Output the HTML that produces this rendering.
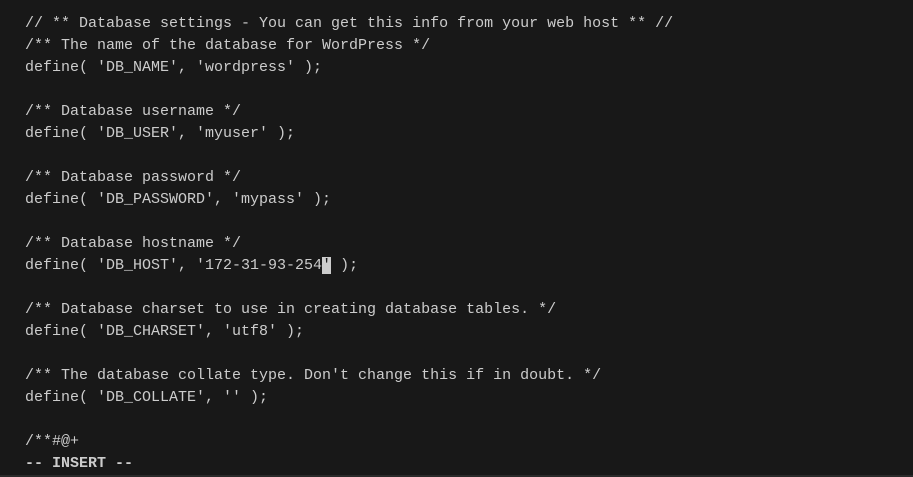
<!DOCTYPE html>
<html><head><meta charset="utf-8"><style>
html,body{margin:0;padding:0;width:913px;height:477px;background:#181818;overflow:hidden}
pre{margin:0;position:absolute;left:25px;top:13px;font-family:"Liberation Mono",monospace;font-size:15px;line-height:22px;color:#cccccc}
.c{background:#cccccc;color:#181818}
b{font-weight:bold}
.bar{position:absolute;left:0;top:475px;width:913px;height:2px;background:#2a2a2a}
</style></head><body>
<pre>// ** Database settings - You can get this info from your web host ** //
/** The name of the database for WordPress */
define( 'DB_NAME', 'wordpress' );

/** Database username */
define( 'DB_USER', 'myuser' );

/** Database password */
define( 'DB_PASSWORD', 'mypass' );

/** Database hostname */
define( 'DB_HOST', '172-31-93-254<span class="c">'</span> );

/** Database charset to use in creating database tables. */
define( 'DB_CHARSET', 'utf8' );

/** The database collate type. Don't change this if in doubt. */
define( 'DB_COLLATE', '' );

/**#@+
<b>-- INSERT --</b></pre>
<div class="bar"></div>
</body></html>
